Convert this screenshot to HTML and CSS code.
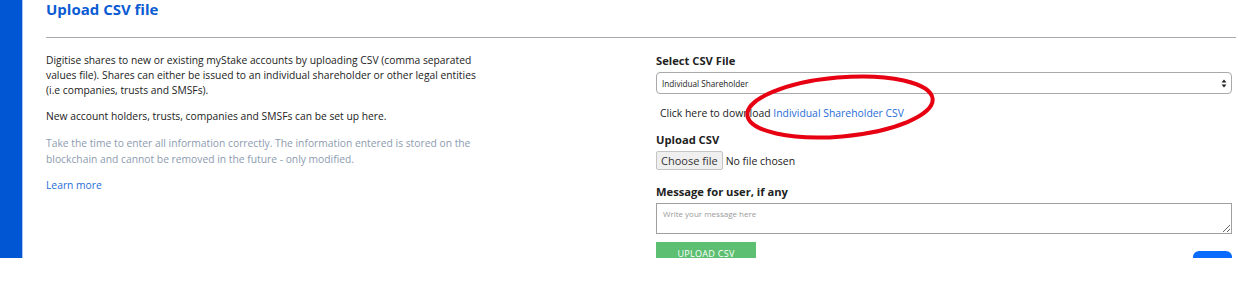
FILE: index.html
```html
<!DOCTYPE html>
<html lang="en">
<head>
    <meta charset="UTF-8">
    <meta name="viewport" content="width=device-width, initial-scale=1.0">
    <title>Upload CSV file - myStake</title>
    <link rel="stylesheet" href="styles.css">
</head>
<body>
    <div class="layout">
        <div class="sidebar"></div>

        <div class="main">
            <div class="header">
                <h1>Upload CSV file</h1>
            </div>

            <div class="columns">
                <div class="info">
                    <p>Digitise shares to new or existing myStake accounts by uploading CSV (comma separated values file). Shares can either be issued to an individual shareholder or other legal entities (i.e companies, trusts and SMSFs).</p>
                    <p>New account holders, trusts, companies and SMSFs can be set up here.</p>
                    <p class="muted">Take the time to enter all information correctly. The information entered is stored on the blockchain and cannot be removed in the future - only modified.</p>
                    <a href="#" class="link">Learn more</a>
                </div>

                <form class="upload-form">
                    <div class="form-group">
                        <label for="csvType">Select CSV File</label>
                        <div class="select-box">
                            <select id="csvType" name="csvType">
                                <option>Individual Shareholder</option>
                                <option>Company</option>
                                <option>Trust</option>
                                <option>SMSF</option>
                            </select>
                            <svg class="select-arrows" width="6" height="9" viewBox="0 0 6 9">
                                <path d="M3 0.5 L5.5 3.5 H0.5 Z" fill="#222"/>
                                <path d="M3 8.5 L5.5 5.5 H0.5 Z" fill="#222"/>
                            </svg>
                        </div>
                        <div class="download">
                            Click here to download <a href="#" class="link">Individual Shareholder CSV</a>
                        </div>
                    </div>

                    <div class="form-group">
                        <label>Upload CSV</label>
                        <div class="file-input">
                            <span class="file-btn">Choose file</span>
                            <span class="file-name">No file chosen</span>
                        </div>
                    </div>

                    <div class="form-group">
                        <label for="message">Message for user, if any</label>
                        <textarea id="message" name="message" placeholder="Write your message here"></textarea>
                    </div>

                    <div class="actions">
                        <button type="submit" class="btn-upload">UPLOAD CSV</button>
                        <span class="help-btn"></span>
                    </div>
                </form>
            </div>
        </div>

        <!-- annotation drawn on the screenshot -->
        <svg class="annotation" width="200" height="72" viewBox="0 0 200 72">
            <ellipse cx="97" cy="34" rx="93" ry="29.5" transform="rotate(-5 97 34)" fill="none" stroke="#e60012" stroke-width="4"/>
        </svg>
    </div>
</body>
</html>
```

FILE: styles.css
```css
body {
    font-family: "Open Sans", Arial, sans-serif;
    margin: 0;
    padding: 0;
    background-color: white;
    color: #222;
}
.layout {
    position: relative;
    display: flex;
    height: 258px;
    overflow: hidden;
}
.sidebar {
    width: 22px;
    flex-shrink: 0;
    background-color: #0157d3;
    border-right: 1px solid #a9c6f2;
}
.main {
    flex: 1;
    padding: 0 2px 0 23px;
}
.header {
    padding-bottom: 19px;
    border-bottom: 1px solid #a5a8ad;
}
.header h1 {
    margin: 0;
    font-size: 15px;
    line-height: 18px;
    font-weight: 700;
    color: #0a5bd3;
}
.columns {
    display: grid;
    grid-template-columns: 610px 1fr;
    padding-top: 15px;
}
.info {
    max-width: 435px;
    font-size: 10.3px;
    line-height: 15px;
}
.info p {
    margin: 0 0 11px;
}
.info .muted {
    color: #8d9bb0;
    line-height: 16px;
}
.link {
    color: #1f6dd8;
    text-decoration: none;
}
.info .link {
    display: block;
}
.upload-form {
    padding-right: 4px;
}
.form-group {
    margin-bottom: 11px;
}
label {
    display: block;
    font-size: 11.2px;
    line-height: 15px;
    font-weight: 700;
    margin-bottom: 4px;
}
.select-box {
    display: flex;
    align-items: center;
    height: 20px;
    border: 1px solid #a9a9a9;
    border-radius: 4px;
    padding: 0 4px 0 0;
}
.select-box select {
    flex: 1;
    appearance: none;
    -webkit-appearance: none;
    border: none;
    background: transparent;
    font-family: "Open Sans", Arial, sans-serif;
    font-size: 8.2px;
    color: #222;
    padding: 0 5px;
    height: 20px;
    outline: none;
}
.download {
    font-size: 10.4px;
    line-height: 15px;
    margin-top: 12px;
    padding-left: 4px;
}
.file-input {
    display: flex;
    align-items: center;
    font-size: 11px;
    margin-bottom: 14px;
}
.file-btn {
    display: inline-block;
    height: 17px;
    line-height: 17px;
    padding: 0 4px;
    background-color: #efefef;
    border: 1px solid #c4c4c4;
    border-radius: 2px;
    color: #333;
}
.file-name {
    margin-left: 3px;
    font-size: 10.5px;
}
textarea {
    display: block;
    width: 100%;
    height: 31px;
    box-sizing: border-box;
    border: 1px solid #a0a0a0;
    padding: 4px 6px;
    font-family: "Open Sans", Arial, sans-serif;
    font-size: 8px;
    resize: vertical;
    margin-bottom: -3px;
}
textarea::placeholder {
    color: #9a9a9a;
}
.actions {
    display: flex;
    justify-content: space-between;
    align-items: flex-start;
}
.btn-upload {
    width: 100px;
    height: 20px;
    background-color: #5cbf71;
    color: white;
    border: none;
    font-family: "Open Sans", Arial, sans-serif;
    font-size: 9px;
    letter-spacing: 0.3px;
    padding: 2px 0 0;
    line-height: 15px;
    cursor: pointer;
}
.help-btn {
    width: 39px;
    height: 20px;
    margin-top: 9px;
    background-color: #0a6cff;
    border-radius: 6px 6px 0 0;
}
.annotation {
    position: absolute;
    left: 743px;
    top: 73px;
}
```
